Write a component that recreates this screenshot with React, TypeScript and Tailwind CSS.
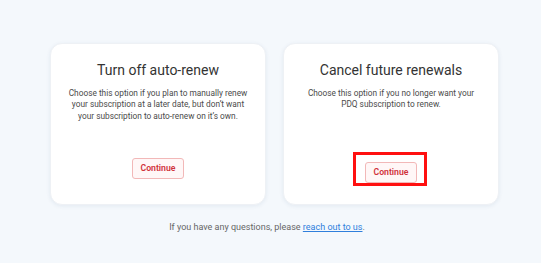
const font = { fontFamily: 'Roboto, "Liberation Sans", sans-serif' };

function OptionCard({
  title,
  body,
  highlight = false,
}: {
  title: string;
  body: string[];
  highlight?: boolean;
}) {
  const button = (
    <button
      type="button"
      className="w-[52px] h-[21px] rounded-[3px] border border-[#f2b8b8] bg-[#fff7f7] text-[8.7px] font-semibold text-[#d0323a]"
    >
      Continue
    </button>
  );

  return (
    <div className="w-[216px] h-[162px] rounded-[12px] bg-white shadow-[0_1px_4px_rgba(30,60,110,0.08)] border border-[#eef1f5] flex flex-col items-center pt-[17px]">
      <h2 className="text-[14px] leading-[18px] text-[#333]">{title}</h2>
      <div className="mt-[9px] text-[8.3px] leading-[11.3px] text-[#4a4a4a] text-center">
        {body.map((line) => (
          <p key={line}>{line}</p>
        ))}
      </div>
      <div className="mt-auto mb-[25px] h-[21px] flex justify-center">
        {highlight ? (
          <div className="border-[3px] border-[#ff1010] pl-[9px] pr-[7px] pt-[3px] pb-[4px] -mt-[6px] h-[34px] ml-[-2px]">
            {button}
          </div>
        ) : (
          button
        )}
      </div>
    </div>
  );
}

export default function App() {
  return (
    <div className="w-[541px] h-[263px] bg-[#f4f8fc] pt-[43px] pl-[50px]" style={font}>
      <div className="flex gap-[17px]">
        <OptionCard
          title="Turn off auto-renew"
          body={[
            'Choose this option if you plan to manually renew',
            'your subscription at a later date, but don’t want',
            'your subscription to auto-renew on it’s own.',
          ]}
        />
        <OptionCard
          title="Cancel future renewals"
          body={['Choose this option if you no longer want your', 'PDQ subscription to renew.']}
          highlight
        />
      </div>
      <p className="mt-[16px] w-[434px] text-center text-[9px] text-[#666]">
        If you have any questions, please{' '}
        <a href="#" className="text-[#2f7fdc] underline">
          reach out to us
        </a>
        .
      </p>
    </div>
  );
}
